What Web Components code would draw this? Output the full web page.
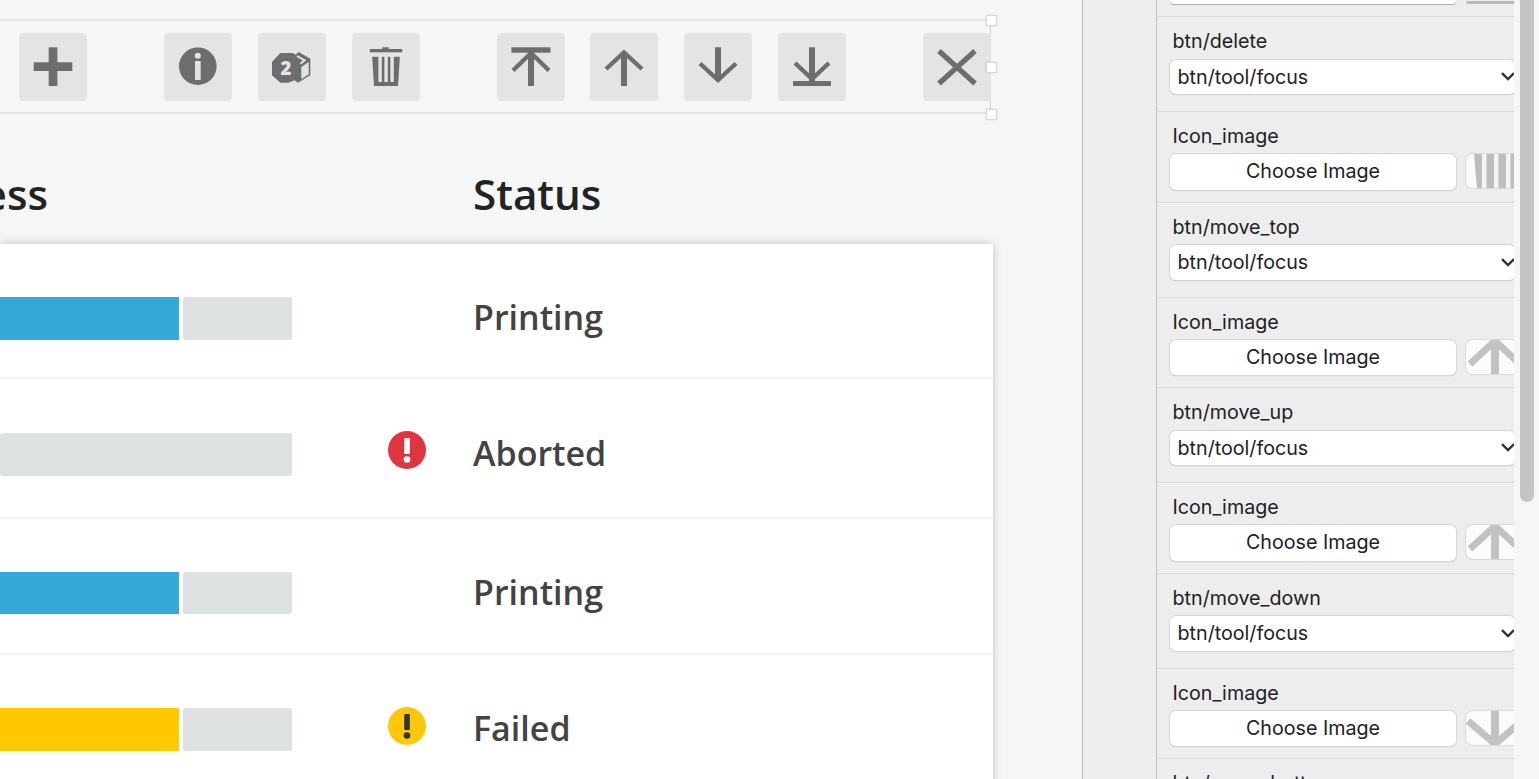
<!DOCTYPE html>
<html lang="en">
<head>
<meta charset="utf-8">
<title>Print queue</title>
<style>
html,body{margin:0;padding:0;height:100%;overflow:hidden;background:#f5f6f6}
body{width:1539px;height:779px}
</style>
</head>
<body>
<x-app></x-app>
<script>
const ICONS = {
  plus:'<rect x="14.7" y="29.3" width="38.6" height="8.7"/><rect x="29.7" y="14.3" width="8.7" height="38.7"/>',
  info:'<circle cx="33.8" cy="33.2" r="18.8"/><circle cx="33.8" cy="22.7" r="3" fill="#e4e4e4"/><rect x="31" y="28" width="5.7" height="19" fill="#e4e4e4"/>',
  dice:'<polygon points="14,29 22.3,20 35,20 37.3,21.7 40.7,19 52.3,25.7 52.3,42.3 40,49.7 36.3,47.3 30.7,49.7 22.3,49.7 14,42.3"/><polygon points="43.3,34 50.7,29 50.7,41.3 43.3,46.3" fill="#e4e4e4"/><polyline points="39,23 46.7,27.3 42.3,30.7" fill="none" stroke="#e4e4e4" stroke-width="2"/><text x="28" y="41.5" font-family="Open Sans" font-weight="800" font-size="18.5" text-anchor="middle" fill="#e4e4e4">2</text>',
  trash:'<rect x="30.2" y="14.3" width="6.6" height="2"/><rect x="17.8" y="16" width="32.4" height="3.3"/><path d="M20.2 23.7H47.8L46 53H22z"/><rect x="26.4" y="23" width="3.4" height="26" fill="#e4e4e4"/><rect x="32.4" y="23" width="3.4" height="26" fill="#e4e4e4"/><rect x="38.4" y="23" width="3.4" height="26" fill="#e4e4e4"/>',
  top:'<rect x="14.4" y="14.3" width="39" height="5.4"/><rect x="31" y="19" width="6" height="34"/><path d="M16 37.5 34 20 52 37.5" fill="none" stroke="#6d6d6d" stroke-width="4.4"/>',
  up:'<rect x="31" y="20" width="6" height="33"/><path d="M16 36 34 19.5 52 36" fill="none" stroke="#6d6d6d" stroke-width="4.4"/>',
  down:'<rect x="31" y="14.3" width="6" height="33"/><path d="M16 30.5 34 47 52 30.5" fill="none" stroke="#6d6d6d" stroke-width="4.4"/>',
  bottom:'<rect x="15" y="48" width="38" height="5"/><rect x="31" y="14.3" width="6" height="34"/><path d="M17 30 34 46 51 30" fill="none" stroke="#6d6d6d" stroke-width="4.4"/>',
  close:'<path d="M16 18 52 50.5M52 18 16 50.5" fill="none" stroke="#6d6d6d" stroke-width="5.2"/>'
};
const THUMBS = {
  trash:'<path d="M8 0H50V35H11z" fill="#bdbdbd"/><rect x="16" y="0" width="4.5" height="35" fill="#f4f4f4"/><rect x="28" y="0" width="4.5" height="35" fill="#f4f4f4"/><rect x="40" y="0" width="4.5" height="35" fill="#f4f4f4"/>',
  up:'<rect x="25" y="0" width="8" height="35" fill="#c2c2c2"/><path d="M4 24 29 1 54 24" fill="none" stroke="#c2c2c2" stroke-width="7"/>',
  down:'<rect x="25" y="0" width="8" height="35" fill="#c2c2c2"/><path d="M2 10 29 33 56 10" fill="none" stroke="#c2c2c2" stroke-width="7"/>'
};
function def(name, css, html, extra){
  const tpl=document.createElement('template');
  tpl.innerHTML='<style>'+css+'</style>'+html;
  customElements.define(name, class extends HTMLElement{
    constructor(){super();this.attachShadow({mode:'open'}).appendChild(tpl.content.cloneNode(true));}
    connectedCallback(){ if(extra) extra.call(this,this.shadowRoot); }
  });
}
def('tool-btn',':host{display:block;width:68px;height:68px;background:#e4e4e4;border-radius:4px;flex:none}svg{display:block;fill:#6d6d6d}',
 '<svg width="68" height="68" viewBox="0 0 68 68"></svg>',
 function(r){r.querySelector('svg').innerHTML=ICONS[this.getAttribute('icon')];});
def('tool-group',':host{display:flex;gap:25.75px}','<slot></slot>');
def('sel-handle',':host{position:absolute;left:985.5px;width:11px;height:11px;background:#fff;border:1px solid #d8d8d8;box-sizing:border-box;box-shadow:0 0 2px rgba(0,0,0,.12)}','');
def('tool-bar',':host{display:flex;position:relative;gap:77px;align-items:center;box-sizing:border-box;width:991px;height:95px;margin-top:19px;padding-left:19px;border-top:2px solid #e6e7e7;border-bottom:2px solid #e3e4e4;border-right:1px solid #d4d4d4}',
 '<slot></slot>');
def('job-bar',':host{display:flex;gap:4px;width:292px;height:42.7px;flex:none}.p{background:var(--c,#36a9d9);width:179px;flex:none}.r{background:#dee1e2;flex:1;border-radius:3px}',
 '<div class="p"></div><div class="r"></div>',
 function(r){
   const c=this.getAttribute('color');
   if(c) r.querySelector('.p').style.background=c; else {r.querySelector('.p').remove();}
 });
def('alert-dot',':host{display:block;width:38px;height:38px;flex:none}svg{display:block}',
 '<svg width="38" height="38" viewBox="0 0 38 38"><circle cx="19" cy="19" r="19"/><rect x="16.2" y="7" width="5.6" height="16" rx="1"/><circle cx="19" cy="28.5" r="3.3"/></svg>',
 function(r){
   const y=this.getAttribute('kind')==='warn';
   r.querySelector('circle').setAttribute('fill',y?'#fec70b':'#dd3640');
   r.querySelector('rect').setAttribute('fill',y?'#333':'#fff');
   r.querySelectorAll('circle')[1].setAttribute('fill',y?'#333':'#fff');
 });
def('job-row',`:host{display:flex;box-sizing:border-box;border-bottom:2px solid #f1f2f2;align-items:flex-start}
 .icon{width:38px;margin-left:96px;flex:none}
 .status{margin-left:47px;font:560 34px/44px "Open Sans",sans-serif;color:#434343}`,
 '<slot name="bar"></slot><div class="icon"><slot name="icon"></slot></div><div class="status"><slot></slot></div>',
 function(r){
   this.style.height=this.getAttribute('h')+'px';
   this.style.paddingTop=this.getAttribute('pad')+'px';
   r.querySelector('.icon').style.marginTop=this.getAttribute('ico')+'px';
   r.querySelector('.status').style.marginTop=this.getAttribute('txt')+'px';
 });
def('job-card',':host{display:block;width:993px;background:#fff;box-shadow:0 0 9px rgba(0,0,0,.22)}','<slot></slot>');
def('job-head',`:host{display:flex;height:130px;box-sizing:border-box;padding-top:52px;font:560 42.2px/56px "Open Sans",sans-serif;color:#232323}
 .a{width:48px;overflow:hidden;display:flex;justify-content:flex-end;flex:none;white-space:nowrap}
 .b{margin-left:425px}`,'<div class="a"><slot name="a"></slot></div><div class="b"><slot name="b"></slot></div>');
def('prop-row',`:host{display:block;box-sizing:border-box;border-bottom:1.5px solid #dadada;padding:14px 0 0 13px;overflow:hidden}
 .l{font:19.7px/20px Inter,sans-serif;color:#222;padding-left:2.5px;margin-bottom:var(--lm,8.5px);white-space:nowrap}`,
 '<div class="l"><slot name="label"></slot></div><slot></slot>',
 function(){ this.style.height=this.getAttribute('h')+'px'; });
def('prop-select',`:host{display:flex;align-items:center;justify-content:space-between;box-sizing:border-box;width:345px;height:34.5px;background:#fff;border-radius:6px;box-shadow:0 0 0 1px #d6d6d6,0 1px 1px #a9a9a9;padding-left:7.5px;font:19.7px/20px Inter,sans-serif;color:#222}
 svg{display:block;flex:none}`,
 '<slot></slot><svg width="14" height="9" viewBox="0 0 14 9"><path d="M1 1.2 7 7 13 1.2" fill="none" stroke="#333" stroke-width="2.4"/></svg>');
def('prop-image',`:host{display:flex;gap:9.5px;align-items:flex-start;margin-top:-.5px}
 .b{width:286px;height:35.5px;background:#fff;border-radius:6px;box-shadow:0 0 0 1px #d6d6d6,0 1px 1px #a9a9a9;text-align:center;font:19.7px/34.5px Inter,sans-serif;color:#222;flex:none}
 .t{width:60px;height:34px;background:#fbfbfb;border-radius:7px 0 0 7px;box-shadow:0 0 0 1px #dadada;overflow:hidden;flex:none}
 svg{display:block}`,
 '<div class="b">Choose Image</div><div class="t"><svg width="60" height="34" viewBox="0 0 60 34"></svg></div>',
 function(r){r.querySelector('svg').innerHTML=THUMBS[this.getAttribute('thumb')]||'';});
def('prop-top',`:host{display:flex;gap:9.5px;box-sizing:border-box;height:17px;border-bottom:1.5px solid #dadada;padding:0 0 12.5px 13px;align-items:flex-end;overflow:hidden}
 .b{width:286px;height:4px;background:#fff;border-radius:0 0 6px 6px;box-shadow:0 1px 1px #a9a9a9;flex:none}
 .t{width:60px;height:3px;background:#b8b8b8;border-radius:0 0 0 6px;flex:none}`,
 '<div class="b"></div><div class="t"></div>');
def('scroll-gutter',`:host{display:block;flex:none;width:24px;height:779px;background:#f6f6f6;padding-left:5.7px;box-sizing:border-box}
 div{width:14.3px;height:501.7px;background:#c4c4c4;border-radius:0 0 7px 7px}`,'<div></div>');
def('x-app',`:host{display:flex;width:1539px;height:779px;overflow:hidden}
 main{width:1082px;flex:none;background:#f5f6f6;border-right:1.5px solid #b9b9b9;overflow:hidden}
 .gap{width:73px;flex:none;background:#ededed;border-right:1.5px solid #c2c2c2}
 .list{width:357px;flex:none;background:#ededed;overflow:hidden;height:779px}`,
 `<main>
   <tool-bar>
     <tool-group><tool-btn icon="plus"></tool-btn></tool-group>
     <tool-group><tool-btn icon="info"></tool-btn><tool-btn icon="dice"></tool-btn><tool-btn icon="trash"></tool-btn></tool-group>
     <tool-group><tool-btn icon="top"></tool-btn><tool-btn icon="up"></tool-btn><tool-btn icon="down"></tool-btn><tool-btn icon="bottom"></tool-btn></tool-group>
     <tool-group><tool-btn icon="close"></tool-btn></tool-group>
     <sel-handle style="top:-6px"></sel-handle><sel-handle style="top:41px"></sel-handle><sel-handle style="top:88px"></sel-handle>
   </tool-bar>
   <job-head><span slot="a">ess</span><span slot="b">Status</span></job-head>
   <job-card>
     <job-row h="135" pad="53" ico="0" txt="-2"><job-bar slot="bar" color="#36a9d9"></job-bar>Printing</job-row>
     <job-row h="139.5" pad="54" ico="-2" txt="-2"><job-bar slot="bar"></job-bar><alert-dot slot="icon"></alert-dot>Aborted</job-row>
     <job-row h="136" pad="53" ico="0" txt="-2"><job-bar slot="bar" color="#36a9d9"></job-bar>Printing</job-row>
     <job-row h="140" pad="53.5" ico="-1.5" txt="-2.5"><job-bar slot="bar" color="#ffc800"></job-bar><alert-dot slot="icon" kind="warn"></alert-dot>Failed</job-row>
   </job-card>
 </main>
 <div class="gap"></div>
 <div class="list">
   <prop-top></prop-top>
   <prop-row h="95"><span slot="label">btn/delete</span><prop-select>btn/tool/focus</prop-select></prop-row>
   <prop-row h="90.5"><span slot="label">Icon_image</span><prop-image thumb="trash"></prop-image></prop-row>
   <prop-row h="95"><span slot="label">btn/move_top</span><prop-select>btn/tool/focus</prop-select></prop-row>
   <prop-row h="90.5"><span slot="label">Icon_image</span><prop-image thumb="up"></prop-image></prop-row>
   <prop-row h="95"><span slot="label">btn/move_up</span><prop-select>btn/tool/focus</prop-select></prop-row>
   <prop-row h="90.5"><span slot="label">Icon_image</span><prop-image thumb="up"></prop-image></prop-row>
   <prop-row h="95"><span slot="label">btn/move_down</span><prop-select>btn/tool/focus</prop-select></prop-row>
   <prop-row h="90.5"><span slot="label">Icon_image</span><prop-image thumb="down"></prop-image></prop-row>
   <prop-row h="90.5"><span slot="label">btn/move_bottom</span></prop-row>
 </div>
 <scroll-gutter></scroll-gutter>`);
</script>
</body>
</html>
